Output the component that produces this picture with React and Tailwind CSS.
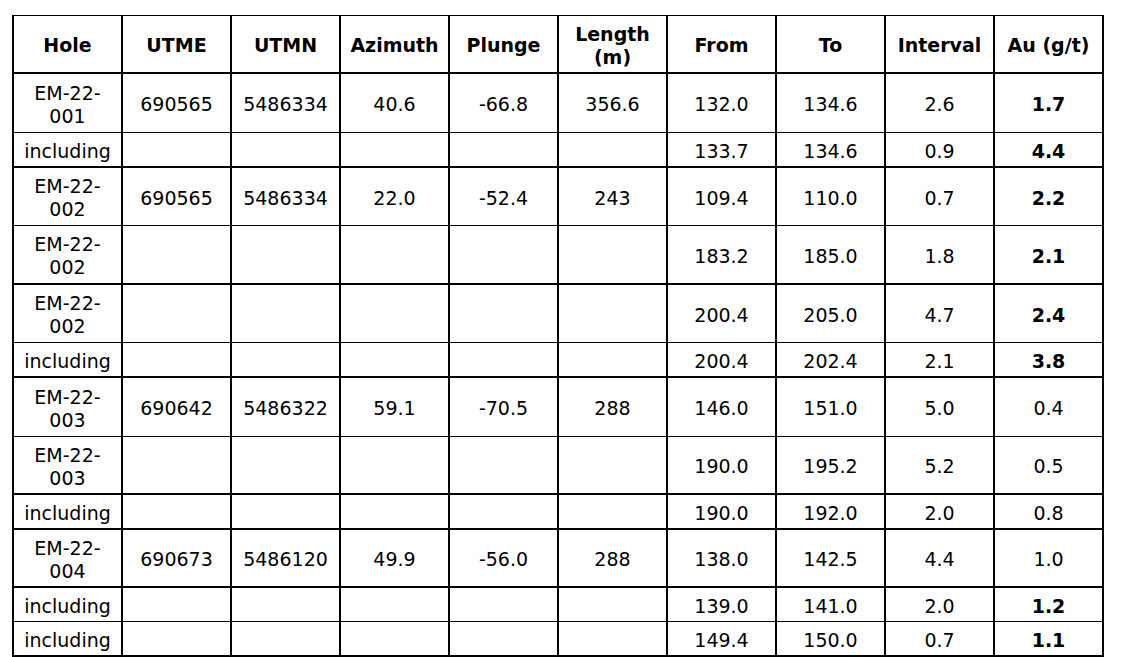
import React from 'react';

const headers = ['Hole', 'UTME', 'UTMN', 'Azimuth', 'Plunge', 'Length (m)', 'From', 'To', 'Interval', 'Au (g/t)'];

// row height + bottom rule width are baked into one class string per row
const rows = [
  { cls: 'h-[59px] border-b', cells: ['EM-22-001', '690565', '5486334', '40.6', '-66.8', '356.6', '132.0', '134.6', '2.6', '1.7'], bold: true },
  { cls: 'h-[35px] border-b-2', cells: ['including', '', '', '', '', '', '133.7', '134.6', '0.9', '4.4'], bold: true },
  { cls: 'h-[58px] border-b', cells: ['EM-22-002', '690565', '5486334', '22.0', '-52.4', '243', '109.4', '110.0', '0.7', '2.2'], bold: true },
  { cls: 'h-[59px] border-b-2', cells: ['EM-22-002', '', '', '', '', '', '183.2', '185.0', '1.8', '2.1'], bold: true },
  { cls: 'h-[58px] border-b', cells: ['EM-22-002', '', '', '', '', '', '200.4', '205.0', '4.7', '2.4'], bold: true },
  { cls: 'h-[35px] border-b-2', cells: ['including', '', '', '', '', '', '200.4', '202.4', '2.1', '3.8'], bold: true },
  { cls: 'h-[59px] border-b', cells: ['EM-22-003', '690642', '5486322', '59.1', '-70.5', '288', '146.0', '151.0', '5.0', '0.4'], bold: false },
  { cls: 'h-[58px] border-b-2', cells: ['EM-22-003', '', '', '', '', '', '190.0', '195.2', '5.2', '0.5'], bold: false },
  { cls: 'h-[35px] border-b-2', cells: ['including', '', '', '', '', '', '190.0', '192.0', '2.0', '0.8'], bold: false },
  { cls: 'h-[58px] border-b-2', cells: ['EM-22-004', '690673', '5486120', '49.9', '-56.0', '288', '138.0', '142.5', '4.4', '1.0'], bold: false },
  { cls: 'h-[34px] border-b', cells: ['including', '', '', '', '', '', '139.0', '141.0', '2.0', '1.2'], bold: true },
  { cls: 'h-[35px] border-b-2', cells: ['including', '', '', '', '', '', '149.4', '150.0', '0.7', '1.1'], bold: true },
];

export default function App() {
  return (
    <div
      className="bg-white w-[1147px] h-[657px] overflow-hidden pl-[12px] pt-[15px] text-black text-[19px] leading-[23px]"
      style={{ fontFamily: '"DejaVu Sans", Verdana, sans-serif' }}
    >
      <div className="grid grid-cols-[repeat(10,109px)] w-[1092px] border-l-2 border-t border-black">
        {/* Header */}
        {headers.map((h) => (
          <div
            key={h}
            className="h-[58px] border-b-2 border-r-2 border-black flex items-center justify-center text-center font-bold px-[6px] pt-[3px]"
          >
            {h}
          </div>
        ))}

        {/* Body */}
        {rows.map((row, i) =>
          row.cells.map((c, j) => (
            <div
              key={`${i}-${j}`}
              className={`${row.cls} border-r-2 border-black flex items-center justify-center text-center px-[6px] pt-[3px] ${
                j === 9 && row.bold ? 'font-bold' : ''
              }`}
            >
              {c}
            </div>
          ))
        )}
      </div>
    </div>
  );
}
